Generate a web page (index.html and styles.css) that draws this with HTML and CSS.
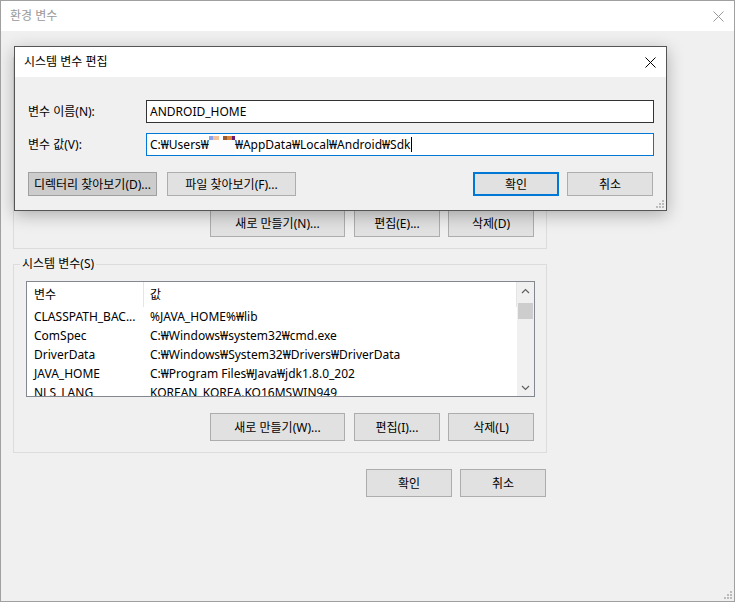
FILE: index.html
```html
<!DOCTYPE html>
<html lang="ko">
<head>
  <meta charset="UTF-8">
  <title>환경 변수</title>
  <link rel="stylesheet" href="styles.css">
</head>
<body>

  <div class="window">
    <div class="titlebar inactive">
      <span class="title">환경 변수</span>
      <svg class="close" width="11" height="11" viewBox="0 0 11 11"><path d="M0.5 0.5 L10.5 10.5 M10.5 0.5 L0.5 10.5"/></svg>
    </div>

    <div class="client">
      <!-- 사용자 변수: 편집 창에 거의 가려짐, 아래쪽 버튼만 보임 -->
      <fieldset class="group user">
        <div class="group-body">
          <div class="listbox user-list"></div>
          <div class="group-buttons">
            <button class="btn btn-wide">새로 만들기(N)...</button>
            <button class="btn">편집(E)...</button>
            <button class="btn">삭제(D)</button>
          </div>
        </div>
      </fieldset>

      <fieldset class="group system">
        <legend>시스템 변수(S)</legend>
        <div class="group-body">
          <div class="listbox">
            <div class="list-view">
              <div class="list-head"><span>변수</span><span>값</span></div>
              <div class="list-row"><span>CLASSPATH_BAC...</span><span>%JAVA_HOME%₩lib</span></div>
              <div class="list-row"><span>ComSpec</span><span>C:₩Windows₩system32₩cmd.exe</span></div>
              <div class="list-row"><span>DriverData</span><span>C:₩Windows₩System32₩Drivers₩DriverData</span></div>
              <div class="list-row"><span>JAVA_HOME</span><span>C:₩Program Files₩Java₩jdk1.8.0_202</span></div>
              <div class="list-row"><span>NLS_LANG</span><span>KOREAN_KOREA.KO16MSWIN949</span></div>
            </div>
            <div class="scrollbar">
              <div class="arrow"><svg width="9" height="6" viewBox="0 0 9 6"><path d="M1 5 L4.5 1.5 L8 5"/></svg></div>
              <div class="track"><div class="thumb"></div></div>
              <div class="arrow"><svg width="9" height="6" viewBox="0 0 9 6"><path d="M1 1 L4.5 4.5 L8 1"/></svg></div>
            </div>
          </div>
          <div class="group-buttons">
            <button class="btn btn-wide">새로 만들기(W)...</button>
            <button class="btn">편집(I)...</button>
            <button class="btn">삭제(L)</button>
          </div>
        </div>
      </fieldset>

      <div class="window-buttons">
        <button class="btn">확인</button>
        <button class="btn">취소</button>
      </div>
    </div>

    <svg class="grip" width="8" height="8" viewBox="0 0 8 8">
      <rect x="6" y="0" width="2" height="2"/><rect x="3" y="3" width="2" height="2"/><rect x="6" y="3" width="2" height="2"/>
      <rect x="0" y="6" width="2" height="2"/><rect x="3" y="6" width="2" height="2"/><rect x="6" y="6" width="2" height="2"/>
    </svg>

    <!-- 시스템 변수 편집 창 (위에 떠 있음) -->
    <div class="edit-dialog">
      <div class="titlebar">
        <span class="title">시스템 변수 편집</span>
        <svg class="close" width="11" height="11" viewBox="0 0 11 11"><path d="M0.5 0.5 L10.5 10.5 M10.5 0.5 L0.5 10.5"/></svg>
      </div>
      <div class="dialog-body">
        <div class="field-row">
          <label>변수 이름(N):</label>
          <div class="field hover">ANDROID_HOME</div>
        </div>
        <div class="field-row">
          <label>변수 값(V):</label>
          <div class="field focused">C:₩Users₩<span class="mosaic"></span>₩AppData₩Local₩Android₩Sdk<span class="caret"></span></div>
        </div>
        <div class="dialog-actions">
          <button class="btn btn-browse pressed">디렉터리 찾아보기(D)...</button>
          <button class="btn btn-browse">파일 찾아보기(F)...</button>
          <button class="btn btn-default">확인</button>
          <button class="btn btn-cancel">취소</button>
        </div>
      </div>
      <svg class="grip" width="8" height="8" viewBox="0 0 8 8">
        <rect x="6" y="0" width="2" height="2"/><rect x="3" y="3" width="2" height="2"/><rect x="6" y="3" width="2" height="2"/>
        <rect x="0" y="6" width="2" height="2"/><rect x="3" y="6" width="2" height="2"/><rect x="6" y="6" width="2" height="2"/>
      </svg>
    </div>
  </div>

</body>
</html>
```

FILE: styles.css
```css
body {
  margin: 0;
  background: #fff;
}

.window {
  position: relative;
  width: 735px;
  height: 602px;
  box-sizing: border-box;
  border: 1px solid #a0a0a0;
  background: #f0f0f0;
  font-family: "Noto Sans", "Noto Sans CJK KR", sans-serif;
  font-size: 12px;
  color: #000;
  overflow: hidden;
}

/* 제목 표시줄 */
.titlebar {
  display: flex;
  align-items: center;
  height: 30px;
  padding-left: 9px;
  background: #fff;
}

.titlebar .title {
  line-height: 16px;
}

.titlebar .close {
  margin-left: auto;
  margin-right: 10px;
  stroke: #000;
  stroke-width: 1;
  fill: none;
}

.titlebar.inactive .title {
  color: #999;
}

.titlebar.inactive .close {
  stroke: #999;
}

.client {
  padding: 26px 0 0 12px;
}

/* 그룹 상자 */
.group {
  width: 534px;
  min-width: 0;
  box-sizing: border-box;
  margin: 0;
  padding: 0;
  border: 1px solid #dcdcdc;
}

.group legend {
  margin-left: 6px;
  padding: 0 2px;
  line-height: 16px;
}

.group.system {
  margin-top: 7px;
}

.group-body {
  padding: 9px 11px 11px 12px;
}

.group-buttons {
  display: flex;
  justify-content: flex-end;
  margin-top: 16px;
  padding-right: 1px;
}

.group-buttons .btn + .btn {
  margin-left: 8px;
}

.group-buttons .btn-wide {
  width: 135px;
  margin-right: 1px;
}

.window-buttons {
  display: flex;
  justify-content: flex-end;
  width: 534px;
  box-sizing: border-box;
  padding-right: 1px;
  margin-top: 16px;
}

.window-buttons .btn + .btn {
  margin-left: 8px;
}

/* 버튼 */
.btn {
  width: 86px;
  height: 28px;
  padding: 0;
  border: 1px solid #adadad;
  background: #e1e1e1;
  font: inherit;
  color: #000;
  white-space: nowrap;
}

/* 목록 */
.listbox {
  display: flex;
  height: 116px;
  box-sizing: border-box;
  border: 1px solid #828790;
  background: #fff;
  overflow: hidden;
}

.user-list {
  height: 126px;
}

.list-view {
  flex: 1;
  overflow: hidden;
}

.list-head,
.list-row {
  display: grid;
  grid-template-columns: 117px 1fr;
  white-space: nowrap;
}

.list-head {
  height: 25px;
  line-height: 25px;
}

.list-head span {
  border-right: 1px solid #e5e5e5;
}

.list-row {
  height: 19px;
  line-height: 19px;
}

.list-head span:first-child,
.list-row span:first-child {
  padding-left: 7px;
}

.list-head span:last-child,
.list-row span:last-child {
  padding-left: 6px;
}

.scrollbar {
  display: flex;
  flex-direction: column;
  width: 17px;
  background: #f0f0f0;
}

.scrollbar .arrow {
  display: flex;
  align-items: center;
  justify-content: center;
  height: 17px;
}

.scrollbar .arrow svg {
  stroke: #606060;
  stroke-width: 1.2;
  fill: none;
}

.scrollbar .track {
  flex: 1;
}

.scrollbar .thumb {
  height: 16px;
  margin: 4px 1px 0;
  background: #cdcdcd;
}

.grip {
  position: absolute;
  right: 2px;
  bottom: 2px;
  fill: #bcbcbc;
}

/* 편집 창 */
.edit-dialog {
  position: absolute;
  left: 13px;
  top: 45px;
  width: 653px;
  height: 165px;
  box-sizing: border-box;
  border: 1px solid #555;
  background: #f0f0f0;
  box-shadow: 0 4px 16px rgba(0, 0, 0, 0.28);
  z-index: 10;
}

.dialog-body {
  padding: 23px 12px 14px 13px;
}

.field-row {
  display: flex;
  align-items: center;
}

.field-row + .field-row {
  margin-top: 10px;
}

.field-row label {
  width: 118px;
  line-height: 16px;
}

.field {
  flex: 1;
  height: 23px;
  box-sizing: border-box;
  border: 1px solid #7a7a7a;
  background: #fff;
  padding-left: 3px;
  line-height: 21px;
  white-space: nowrap;
  overflow: hidden;
}

.field.hover {
  border-color: #333;
}

.field.focused {
  border-color: #0078d7;
}

.mosaic {
  display: inline-block;
  width: 26px;
  height: 17px;
  vertical-align: -4px;
  background: linear-gradient(to right, #8ea4e6 0 4px, #f2c39b 4px 10px, #fff 10px 14px, #9c5a2c 14px 18px, #d9853c 18px 23px, #6c1a6e 23px 26px) top / 100% 4px no-repeat, #fcfcfc;
}

.caret {
  display: inline-block;
  width: 1px;
  height: 15px;
  margin-left: 1px;
  vertical-align: -3px;
  background: #000;
}

.dialog-actions {
  display: flex;
  margin-top: 16px;
}

.dialog-actions .btn {
  height: 24px;
}

.btn-browse {
  width: 129px;
}

.btn-browse + .btn-browse {
  margin-left: 10px;
}

.btn.pressed {
  background: #cccccc;
  border-color: #a0a0a0;
}

.btn-default {
  margin-left: auto;
  border: 2px solid #0078d7;
}

.btn-cancel {
  margin-left: 8px;
  margin-right: 1px;
}
```
